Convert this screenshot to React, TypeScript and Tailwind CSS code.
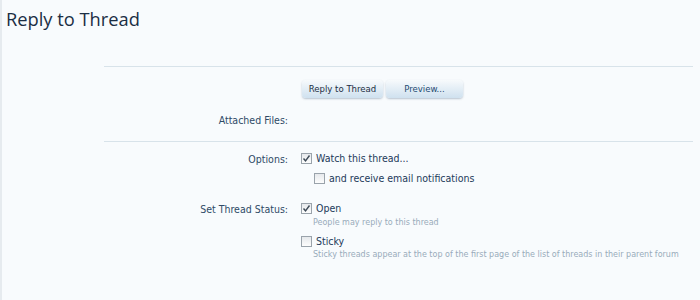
import React from "react";

const condensed = { fontFamily: "'DejaVu Sans Condensed', 'DejaVu Sans', Verdana, sans-serif" };

function Checkbox({ checked }: { checked?: boolean }) {
  return (
    <span className="inline-flex items-center justify-center w-[11px] h-[11px] border border-[#9aa3ab] bg-gradient-to-b from-[#e6e9ec] to-[#fdfdfd] shrink-0">
      {checked && (
        <svg width="9" height="9" viewBox="0 0 9 9">
          <path d="M1.5 4.5 L3.5 6.8 L7.5 1.5" fill="none" stroke="#3d4a57" strokeWidth="1.4" />
        </svg>
      )}
    </span>
  );
}

function Button({ children, className = "" }: { children: React.ReactNode; className?: string }) {
  return (
    <button
      className={`h-[18px] rounded-[4px] bg-gradient-to-b from-[#f7fafc] to-[#cfe1ef] shadow-[0_1px_2px_rgba(60,90,120,0.35)] text-[9.5px] ${className}`}
      style={condensed}
    >
      {children}
    </button>
  );
}

export default function App() {
  return (
    <div
      className="w-[700px] h-[300px] bg-[#f8fbfd] border-l-2 border-[#e6ebef] overflow-hidden"
      style={{ fontFamily: "'DejaVu Sans', Verdana, sans-serif" }}
    >
      <h1
        className="pl-[4px] pt-[7px] text-[18.3px] leading-[24px] text-[#1b2e44]"
        style={{ fontFamily: "'Open Sans', sans-serif" }}
      >
        Reply to Thread
      </h1>

      <div className="ml-[102px] mr-[7px] mt-[35px] border-t border-[#d8e3ea]" style={condensed}>
        <div className="flex gap-[3px] pl-[198px] pt-[13px]">
          <Button className="w-[81px] text-[#1d2f44]">Reply to Thread</Button>
          <Button className="w-[77px] text-[#244b72]">Preview...</Button>
        </div>

        <div className="flex items-center h-[22px] mt-[12px] text-[10.5px] text-[#2e4a66]">
          <div className="w-[184px] text-right">Attached Files:</div>
        </div>

        <div className="border-t border-[#d8e3ea] mt-[9px] pt-[9px] text-[10.5px]">
          <div className="flex">
            <div className="w-[184px] text-right text-[#2e4a66] leading-[14px] pt-[1px]">Options:</div>
            <div className="pl-[13px] flex flex-col gap-[6px]">
              <label className="flex items-center gap-[4px] text-[#1d3a5a] text-[10.5px] leading-[14px]">
                <Checkbox checked /> Watch this thread...
              </label>
              <label className="flex items-center gap-[4px] pl-[13px] text-[#1d3a5a] text-[10.5px] leading-[14px]">
                <Checkbox /> and receive email notifications
              </label>
            </div>
          </div>

          <div className="flex mt-[16px]">
            <div className="w-[184px] text-right text-[#2e4a66] leading-[14px] pt-[1px]">Set Thread Status:</div>
            <div className="pl-[13px] flex flex-col">
              <label className="flex items-center gap-[4px] text-[#1d3a5a] text-[10.5px] leading-[14px]">
                <Checkbox checked /> Open
              </label>
              <div
                className="pl-[12px] mt-[1px] text-[8px] leading-[14px] text-[#98abbb]"
                style={{ fontFamily: "'DejaVu Sans', Verdana, sans-serif" }}
              >
                People may reply to this thread
              </div>
              <label className="flex items-center gap-[4px] mt-[4px] text-[#1d3a5a] text-[10.5px] leading-[14px]">
                <Checkbox /> Sticky
              </label>
              <div
                className="pl-[12px] text-[8px] leading-[14px] text-[#98abbb]"
                style={{ fontFamily: "'DejaVu Sans', Verdana, sans-serif" }}
              >
                Sticky threads appear at the top of the first page of the list of threads in their parent forum
              </div>
            </div>
          </div>
        </div>
      </div>
    </div>
  );
}
